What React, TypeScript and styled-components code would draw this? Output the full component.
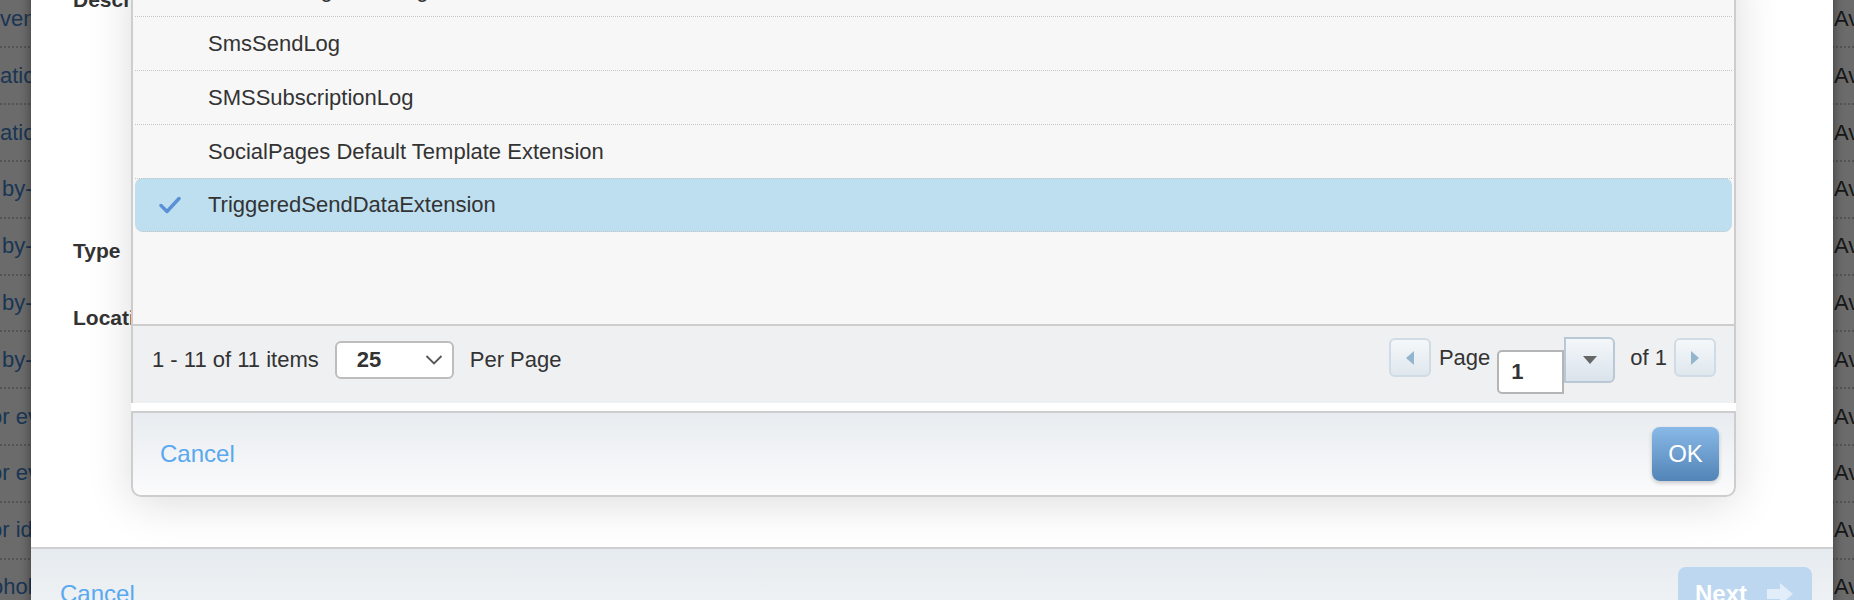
import * as React from "react";
import styled, { createGlobalStyle } from "styled-components";

const GlobalStyle = createGlobalStyle`
  html, body {
    margin: 0;
    padding: 0;
    width: 1854px;
    height: 600px;
    overflow: hidden;
    font-family: "Liberation Sans", Arial, Helvetica, sans-serif;
    color: #333;
  }
`;

// rows of the page that sits behind the dimmed overlay
const backgroundRows = [
  { name: "vent", shift: 0 },
  { name: "ation", shift: 0 },
  { name: "ation", shift: 0 },
  { name: "by-", shift: 2 },
  { name: "by-", shift: 2 },
  { name: "by-", shift: 2 },
  { name: "by-", shift: 2 },
  { name: "or ev", shift: -10 },
  { name: "or ev", shift: -10 },
  { name: "or id", shift: -10 },
  { name: "ohol", shift: -9 },
];

const extensions = [
  "SMSMessageTracking",
  "SmsSendLog",
  "SMSSubscriptionLog",
  "SocialPages Default Template Extension",
  "TriggeredSendDataExtension",
];

const selectedExtension = "TriggeredSendDataExtension";

const CheckIcon = () => (
  <svg width="22" height="18" viewBox="0 0 22 18">
    <path
      d="M2 9.5 L8 15.5 L20 2.5"
      fill="none"
      stroke="#5b8fd6"
      strokeWidth="3.4"
      strokeLinecap="round"
      strokeLinejoin="round"
    />
  </svg>
);

const ChevronDown = () => (
  <svg width="18" height="12" viewBox="0 0 18 12">
    <path d="M1.5 2 L9 9.5 L16.5 2" fill="none" stroke="#555" strokeWidth="1.8" />
  </svg>
);

const Triangle = ({ dir, color }: { dir: "left" | "right" | "down"; color: string }) => {
  if (dir === "down") {
    return (
      <svg width="14" height="8" viewBox="0 0 14 8">
        <path d="M0 0 H14 L7 8 Z" fill={color} />
      </svg>
    );
  }
  return (
    <svg width="8" height="14" viewBox="0 0 8 14">
      <path d={dir === "left" ? "M8 0 V14 L0 7 Z" : "M0 0 V14 L8 7 Z"} fill={color} />
    </svg>
  );
};

const NextArrow = () => (
  <svg width="26" height="22" viewBox="0 0 26 22">
    <path d="M0 6 H13 V0 L26 11 L13 22 V16 H0 Z" fill="rgba(255,255,255,0.55)" />
  </svg>
);

const App: React.FC = () => {
  return (
    <Page>
      <GlobalStyle />
      <BackgroundTable>
        {backgroundRows.map((row, i) => (
          <BgRow key={i}>
            <BgName $shift={row.shift}>{row.name}</BgName>
            <BgStatus>Available</BgStatus>
          </BgRow>
        ))}
      </BackgroundTable>
      <Overlay />

      <OuterModal>
        <OuterBody>
          <FieldRow $height={251}>
            <FieldLabel>Description</FieldLabel>
          </FieldRow>
          <FieldRow $height={67}>
            <FieldLabel>Type</FieldLabel>
          </FieldRow>
          <FieldRow $height={67}>
            <FieldLabel>Location</FieldLabel>
          </FieldRow>
        </OuterBody>
        <OuterFooter>
          <LinkButton>Cancel</LinkButton>
          <NextButton disabled>
            Next
            <NextArrow />
          </NextButton>
        </OuterFooter>

        <PickerDialog>
          <Panel>
            <ItemList>
              {extensions.map((name) => {
                const selected = name === selectedExtension;
                return (
                  <ItemRow key={name} $selected={selected}>
                    <CheckSlot>{selected && <CheckIcon />}</CheckSlot>
                    {name}
                  </ItemRow>
                );
              })}
            </ItemList>
            <Pager>
              <PagerGroup>
                <span>1 - 11 of 11 items</span>
                <PageSizeSelect>
                  25
                  <ChevronDown />
                </PageSizeSelect>
                <span>Per Page</span>
              </PagerGroup>
              <PageNav>
                <NavButton>
                  <Triangle dir="left" color="#93b5cd" />
                </NavButton>
                <NavText>Page</NavText>
                <PageInput>1</PageInput>
                <PageDropButton>
                  <Triangle dir="down" color="#666" />
                </PageDropButton>
                <NavText $gapLeft={15}>of 1</NavText>
                <NavButton>
                  <Triangle dir="right" color="#93b5cd" />
                </NavButton>
              </PageNav>
            </Pager>
          </Panel>
          <DialogFooter>
            <LinkButton>Cancel</LinkButton>
            <PrimaryButton>OK</PrimaryButton>
          </DialogFooter>
        </PickerDialog>
      </OuterModal>
    </Page>
  );
};

export default App;

const Page = styled.div`
  position: relative;
  width: 1854px;
  height: 600px;
  overflow: hidden;
  background: #fff;
`;

const BackgroundTable = styled.div`
  margin-top: -8.4px;
  display: flex;
  flex-direction: column;
`;

const BgRow = styled.div`
  box-sizing: border-box;
  height: 56.8px;
  flex: none;
  display: flex;
  align-items: center;
  justify-content: space-between;
  border-bottom: 2px dotted #c9c9c9;
  font-size: 22px;
`;

const BgName = styled.span<{ $shift: number }>`
  margin-left: ${(p) => p.$shift}px;
  color: #4280c8;
  white-space: nowrap;
`;

const BgStatus = styled.span`
  width: 20px;
  overflow: hidden;
  white-space: nowrap;
  color: #3a3a3a;
`;

const Overlay = styled.div`
  position: absolute;
  inset: 0;
  background: rgba(0, 0, 0, 0.58);
`;

const OuterModal = styled.div`
  position: absolute;
  left: 31px;
  right: 21px;
  top: -50px;
  bottom: -120px;
  display: flex;
  flex-direction: column;
  background: #fff;
  box-shadow: 0 0 10px rgba(0, 0, 0, 0.45);
`;

const OuterBody = styled.div`
  flex: none;
  height: 597px;
  box-sizing: border-box;
  padding: 38px 0 0 42px;
`;

const FieldRow = styled.div<{ $height: number }>`
  height: ${(p) => p.$height}px;
`;

const FieldLabel = styled.div`
  font-size: 21px;
  font-weight: bold;
  line-height: 24px;
  color: #333;
`;

const OuterFooter = styled.div`
  flex: 1;
  display: flex;
  align-items: flex-start;
  justify-content: space-between;
  padding: 18px 21px 0 29px;
  border-top: 2px solid #cfcfcf;
  background: linear-gradient(#e6ebef, #f4f6f8 90px);
`;

const LinkButton = styled.a`
  font-size: 24px;
  color: #5aa8ef;
  line-height: 54px;
  cursor: pointer;
`;

const NextButton = styled.button`
  height: 54px;
  display: flex;
  align-items: center;
  gap: 20px;
  padding: 0 19px 0 17px;
  border: none;
  border-radius: 8px;
  background: #bcd7ef;
  color: #fff;
  font-family: inherit;
  font-size: 24px;
  font-weight: bold;
`;

const PickerDialog = styled.div`
  position: absolute;
  left: 100px;
  top: 13px;
  width: 1605px;
  background: #fff;
  border-radius: 0 0 10px 10px;
  box-shadow: 0 6px 45px rgba(0, 0, 0, 0.14);
`;

const Panel = styled.div`
  border-left: 2px solid #cdcdcd;
  border-right: 2px solid #cdcdcd;
`;

const ItemList = styled.div`
  height: 361px;
  box-sizing: border-box;
  padding: 0 2px;
  background: #f7f7f7;
`;

const ItemRow = styled.div<{ $selected?: boolean }>`
  box-sizing: border-box;
  height: 54px;
  display: flex;
  align-items: center;
  padding-left: 24px;
  font-size: 22px;
  color: #333;
  border-bottom: 1px dotted #c6c6c6;
  background: ${(p) => (p.$selected ? "#bedff0" : "transparent")};
  border-radius: ${(p) => (p.$selected ? "8px" : "0")};
  border-top: ${(p) => (p.$selected ? "1px dotted #c6c6c6" : "none")};
  margin-top: ${(p) => (p.$selected ? "-1px" : "0")};
`;

const CheckSlot = styled.span`
  width: 49px;
  display: flex;
  align-items: center;
`;

const Pager = styled.div`
  height: 79px;
  display: flex;
  align-items: flex-start;
  justify-content: space-between;
  padding: 12px 18px 0 19px;
  box-sizing: border-box;
  border-top: 2px solid #cdcdcd;
  background: #eff0f2;
  font-size: 22px;
  color: #333;
`;

const PagerGroup = styled.div`
  height: 44px;
  display: flex;
  align-items: center;
  gap: 16px;
`;

const PageSizeSelect = styled.div`
  width: 119px;
  height: 38px;
  box-sizing: border-box;
  display: flex;
  align-items: center;
  justify-content: space-between;
  padding: 0 9px 0 20px;
  border: 2px solid #bdbdbd;
  border-radius: 6px;
  background: #fff;
  font-weight: bold;
`;

const PageNav = styled.div`
  display: flex;
  align-items: flex-start;
`;

const NavButton = styled.div`
  width: 42px;
  height: 39px;
  box-sizing: border-box;
  display: flex;
  align-items: center;
  justify-content: center;
  border: 2px solid #d0dce5;
  border-radius: 6px;
  background: linear-gradient(#f5f8fa, #dfe7ee);
`;

const NavText = styled.span<{ $gapLeft?: number }>`
  line-height: 39px;
  margin: 0 7px 0 ${(p) => p.$gapLeft ?? 8}px;
`;

const PageInput = styled.div`
  width: 67px;
  height: 44px;
  box-sizing: border-box;
  margin-top: 12px;
  padding-left: 12px;
  display: flex;
  align-items: center;
  border: 2px solid #b5b5b5;
  border-radius: 5px 0 0 5px;
  background: #fff;
  font-weight: bold;
`;

const PageDropButton = styled.div`
  width: 51px;
  height: 46px;
  box-sizing: border-box;
  margin-top: -1px;
  display: flex;
  align-items: center;
  justify-content: center;
  border: 2px solid #b9c8d4;
  border-radius: 0 6px 6px 0;
  background: linear-gradient(#f4f7fa, #dae3ec);
`;

const DialogFooter = styled.div`
  margin-top: 8px;
  height: 86px;
  box-sizing: border-box;
  display: flex;
  align-items: center;
  justify-content: space-between;
  padding: 0 15px 0 27px;
  border: 2px solid #cdcdcd;
  border-radius: 0 0 10px 10px;
  background: linear-gradient(#e8ecf0, #fbfbfc);
`;

const PrimaryButton = styled.button`
  width: 67px;
  height: 54px;
  border: none;
  border-radius: 8px;
  background: linear-gradient(#88b9e7, #5284b7);
  box-shadow: 0 2px 4px rgba(0, 0, 0, 0.2);
  color: #fff;
  font-family: inherit;
  font-size: 24px;
`;
